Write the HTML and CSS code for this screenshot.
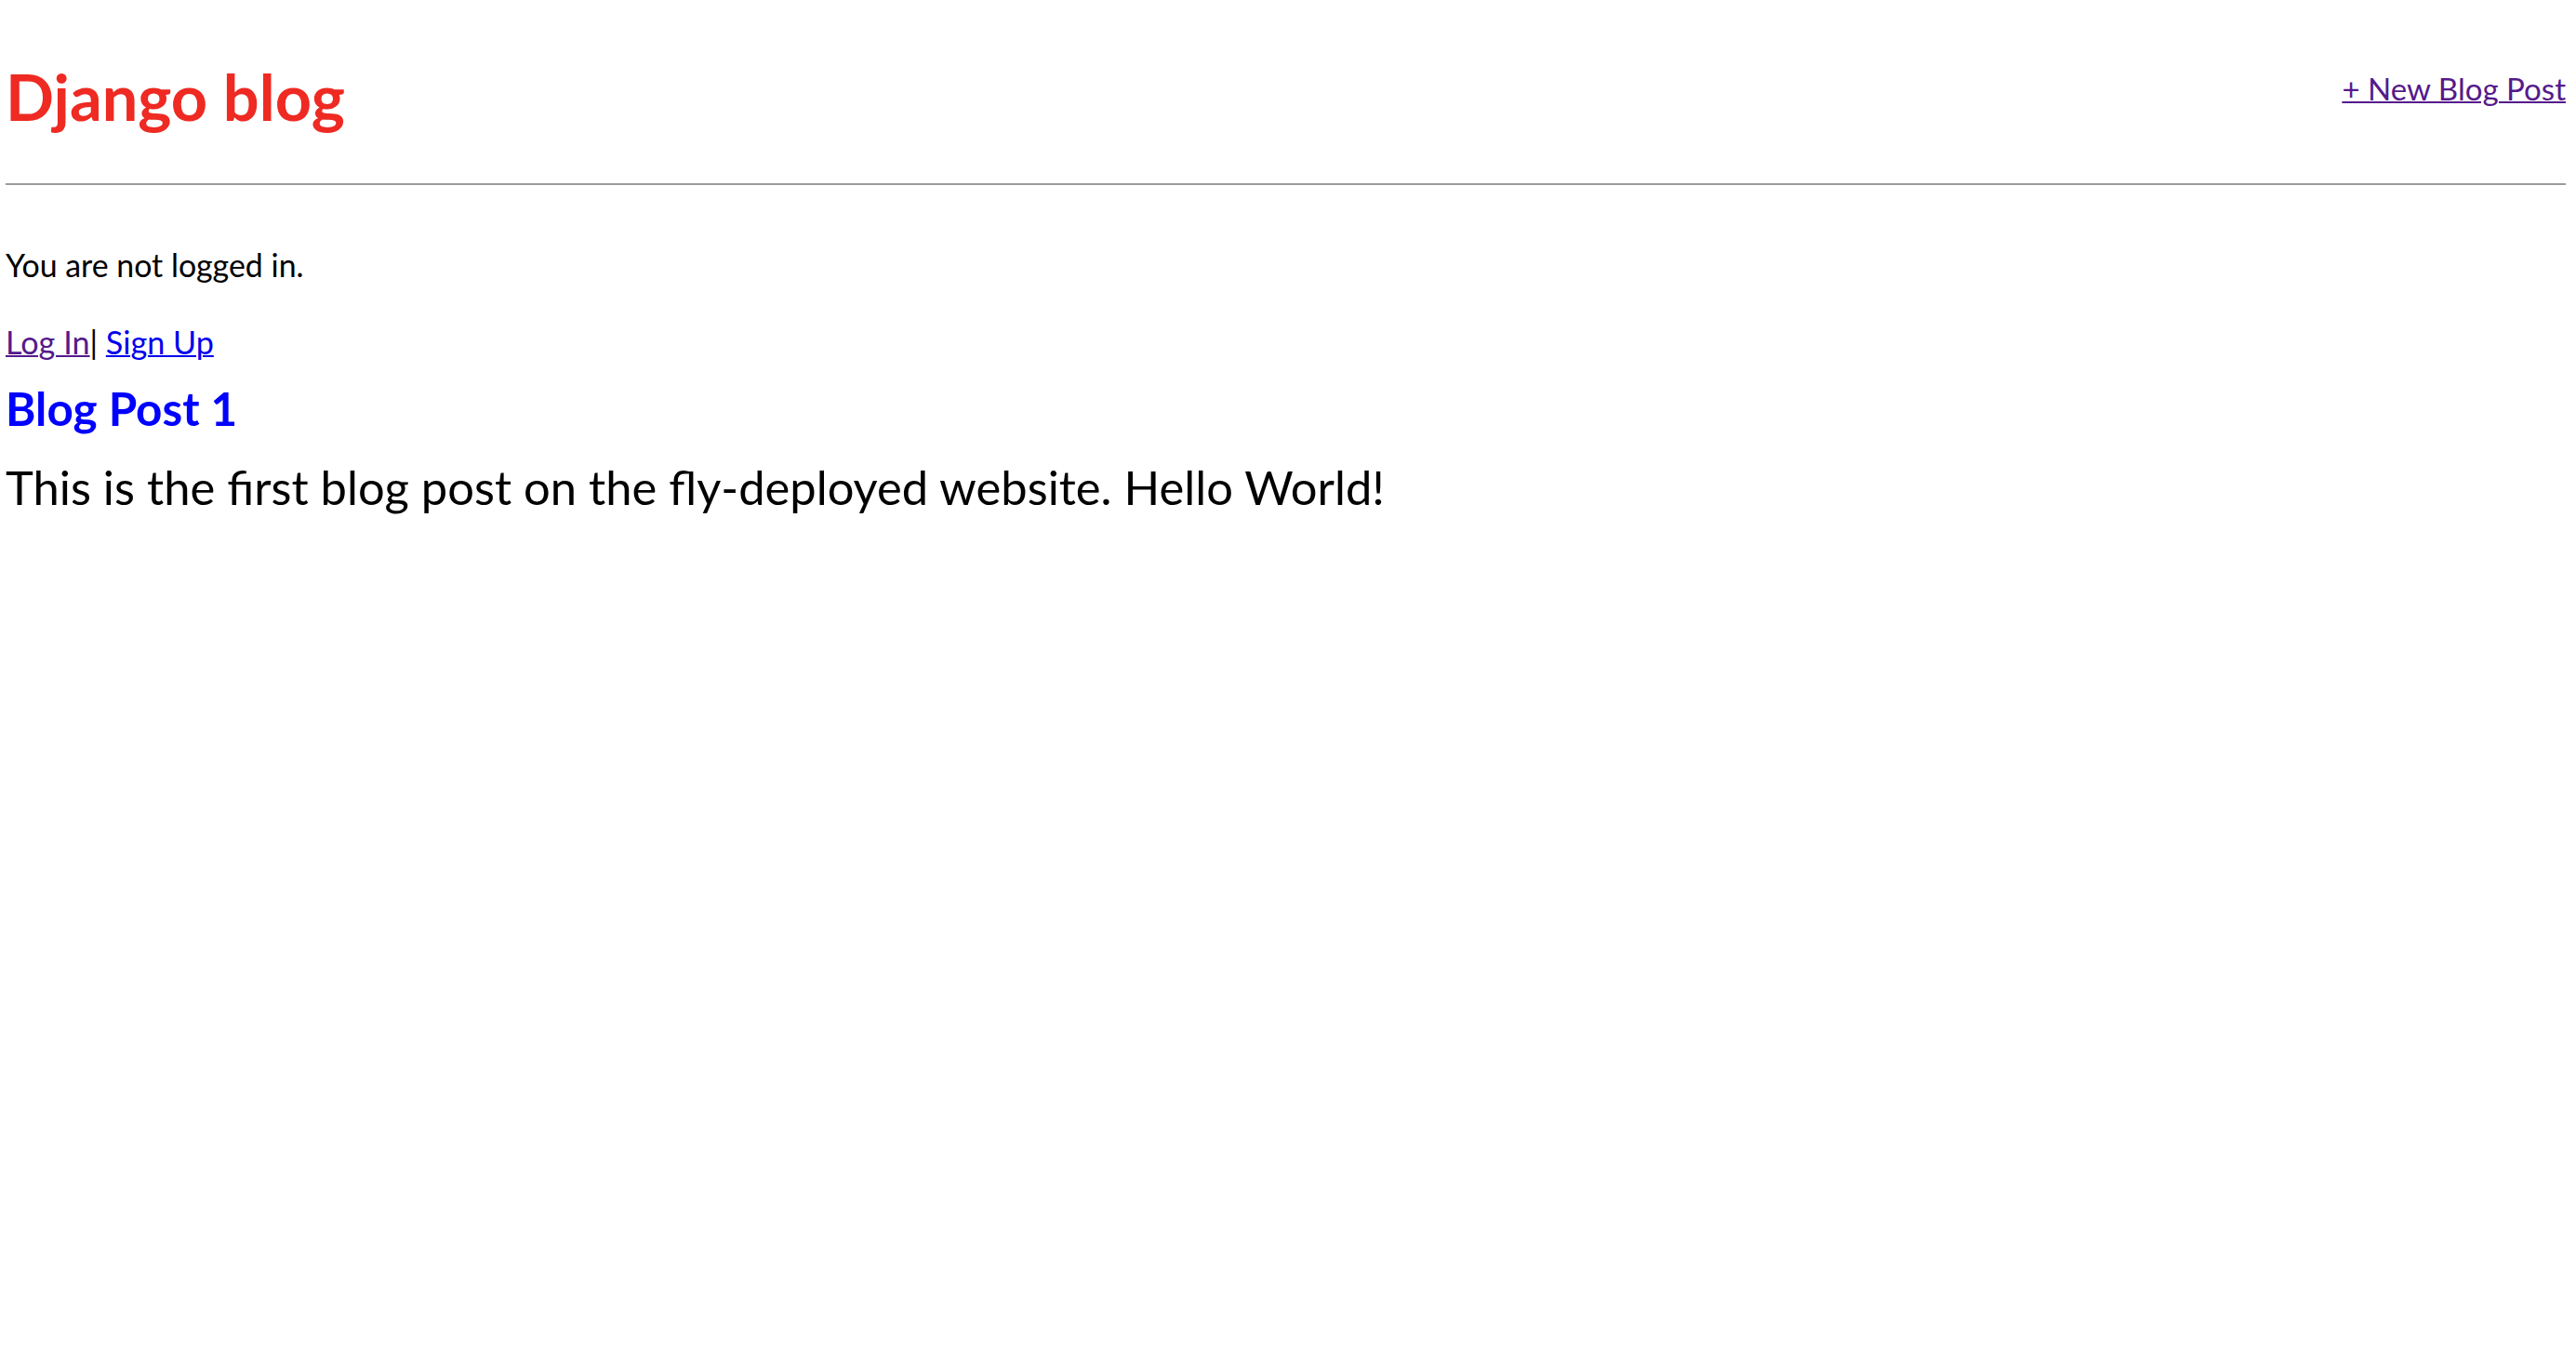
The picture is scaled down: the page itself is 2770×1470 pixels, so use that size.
FILE: index.html
```html
<!DOCTYPE html>
<html lang="en">
<head>
<meta charset="utf-8">
<title>Django blog</title>
<link rel="stylesheet" href="styles.css">
</head>
<body>
<header class="site-header">
  <h1 class="site-title">Django blog</h1>
  <a class="new-post visited" href="#">+ New Blog Post</a>
</header>
<hr class="divider">
<p class="status">You are not logged in.</p>
<p class="auth"><a class="visited" href="#">Log In</a>| <a class="link" href="#">Sign Up</a></p>
<h2 class="post-title"><a href="#">Blog Post 1</a></h2>
<p class="post-body">This is the first blog post on the fly-deployed website. Hello World!</p>
</body>
</html>
```
FILE: styles.css
```css
html, body {
  background: #ffffff;
}
body {
  margin: 0 11px 0 6px;
  font-family: Lato, "Noto Sans", sans-serif;
  color: #000000;
  line-height: 1.2;
}
.site-header {
  display: flex;
  justify-content: space-between;
  align-items: flex-start;
}
.site-title {
  margin: 63.4px 0 0;
  font-size: 68.5px;
  font-weight: 700;
  line-height: 1.2;
  color: #ee2a22;
}
.new-post {
  margin-top: 76.3px;
  font-size: 33.1px;
  line-height: 1.2;
}
.visited {
  color: #551a8b;
  text-decoration-thickness: 2px;
}
.link {
  color: #0000ee;
  text-decoration-thickness: 2px;
}
.divider {
  margin: 51.4px 0 0;
  height: 2px;
  border: none;
  background: #9b9b9b;
}
.status {
  margin: 66px 0 0;
  font-size: 33.9px;
}
.auth {
  margin: 41px 0 0;
  font-size: 34.2px;
}
.post-title {
  margin: 22.2px 0 0;
  font-size: 49.4px;
  font-weight: 700;
  line-height: 1.2;
}
.post-title a {
  color: #0000ff;
  text-decoration: none;
}
.post-body {
  margin: 25.3px 0 0;
  font-size: 50.7px;
}
```
